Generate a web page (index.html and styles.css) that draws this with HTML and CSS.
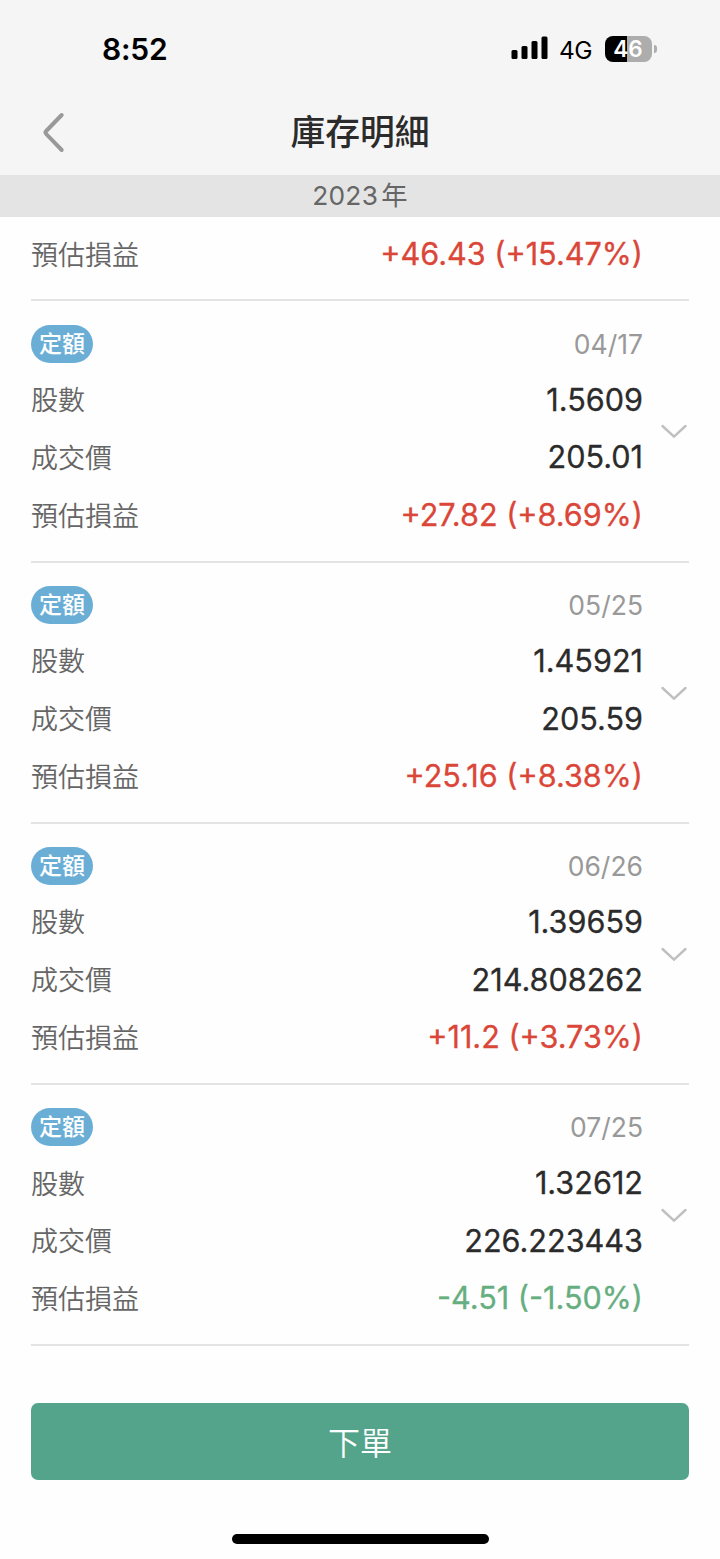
FILE: index.html
```html
<!DOCTYPE html>
<html lang="zh-Hant">
<head>
    <meta charset="UTF-8">
    <meta name="viewport" content="width=device-width, initial-scale=1.0">
    <title>庫存明細</title>
    <link rel="stylesheet" href="styles.css">
</head>
<body>
    <!-- 狀態列 -->
    <div class="status-bar">
        <span class="time">8:52</span>
        <div class="status-icons">
            <svg class="signal" width="38" height="24" viewBox="0 0 38 24">
                <rect x="0.5" y="14" width="6" height="9" rx="1.5"/>
                <rect x="10.5" y="10" width="6" height="13" rx="1.5"/>
                <rect x="20.5" y="5" width="6" height="18" rx="1.5"/>
                <rect x="30.5" y="0.5" width="6" height="22.5" rx="1.5"/>
            </svg>
            <span class="network">4G</span>
            <div class="battery">
                <div class="battery-body">46</div>
                <div class="battery-tip"></div>
            </div>
        </div>
    </div>

    <!-- 標題 -->
    <header class="nav-bar">
        <svg class="back" width="24" height="42" viewBox="0 0 24 42">
            <path d="M19.7 3 L4.2 19 Q2.8 20.5 4.2 22 L19.7 38"/>
        </svg>
        <h1 class="title">庫存明細</h1>
    </header>
    <div class="year">2023<span class="year-unit">年</span></div>

    <!-- 交易明細 -->
    <main class="list">
        <section class="item item-first">
            <div class="row"><span class="label">預估損益</span><span class="value up">+46.43 (+15.47%)</span></div>
        </section>

        <section class="item">
            <div class="row head"><span class="tag">定額</span><span class="date">04/17</span></div>
            <div class="row"><span class="label">股數</span><span class="value">1.5609</span></div>
            <div class="row"><span class="label">成交價</span><span class="value">205.01</span></div>
            <div class="row"><span class="label">預估損益</span><span class="value up">+27.82 (+8.69%)</span></div>
            <svg class="arrow" width="28" height="16" viewBox="0 0 28 16"><path d="M2.5 2 L14 12.7 L25.5 2"/></svg>
        </section>

        <section class="item">
            <div class="row head"><span class="tag">定額</span><span class="date">05/25</span></div>
            <div class="row"><span class="label">股數</span><span class="value">1.45921</span></div>
            <div class="row"><span class="label">成交價</span><span class="value">205.59</span></div>
            <div class="row"><span class="label">預估損益</span><span class="value up">+25.16 (+8.38%)</span></div>
            <svg class="arrow" width="28" height="16" viewBox="0 0 28 16"><path d="M2.5 2 L14 12.7 L25.5 2"/></svg>
        </section>

        <section class="item">
            <div class="row head"><span class="tag">定額</span><span class="date">06/26</span></div>
            <div class="row"><span class="label">股數</span><span class="value">1.39659</span></div>
            <div class="row"><span class="label">成交價</span><span class="value">214.808262</span></div>
            <div class="row"><span class="label">預估損益</span><span class="value up">+11.2 (+3.73%)</span></div>
            <svg class="arrow" width="28" height="16" viewBox="0 0 28 16"><path d="M2.5 2 L14 12.7 L25.5 2"/></svg>
        </section>

        <section class="item">
            <div class="row head"><span class="tag">定額</span><span class="date">07/25</span></div>
            <div class="row"><span class="label">股數</span><span class="value">1.32612</span></div>
            <div class="row"><span class="label">成交價</span><span class="value">226.223443</span></div>
            <div class="row"><span class="label">預估損益</span><span class="value down">-4.51 (-1.50%)</span></div>
            <svg class="arrow" width="28" height="16" viewBox="0 0 28 16"><path d="M2.5 2 L14 12.7 L25.5 2"/></svg>
        </section>
    </main>

    <!-- 下單按鈕 -->
    <footer class="footer">
        <button class="order-button">下單</button>
        <div class="home-indicator"></div>
    </footer>
</body>
</html>
```
FILE: styles.css
```css
* {
    box-sizing: border-box;
}
body {
    margin: 0;
    height: 1559px;
    overflow: hidden;
    display: flex;
    flex-direction: column;
    background-color: #fefefe;
    color: #2b2b2b;
    font-family: Inter, "Noto Sans CJK TC", sans-serif;
}
.status-bar {
    display: flex;
    justify-content: space-between;
    align-items: center;
    height: 90px;
    padding: 7px 63px 0 102px;
    background-color: #f5f5f5;
    color: #000;
}
.time {
    font-size: 30px;
    font-weight: 600;
    line-height: 36px;
    letter-spacing: -0.2px;
}
.status-icons {
    display: flex;
    align-items: center;
}
.signal {
    margin-top: -1px;
}
.network {
    width: 34px;
    margin: 2px 12px 0 10px;
    font-size: 24.5px;
    line-height: 30px;
    letter-spacing: -0.6px;
}
.battery {
    display: flex;
    align-items: center;
    gap: 2px;
}
.battery-body {
    width: 47px;
    height: 26px;
    padding-right: 1px;
    border-radius: 8px;
    background: linear-gradient(to right, #000 22px, #adadad 22px);
    color: #fff;
    font-size: 22.5px;
    font-weight: 600;
    line-height: 26px;
    text-align: center;
}
.battery-tip {
    width: 3px;
    height: 8px;
    border-radius: 0 4px 4px 0;
    background-color: #adadad;
}
.nav-bar {
    display: grid;
    grid-template-columns: 42px 1fr 42px;
    align-items: center;
    height: 85px;
    background-color: #f5f5f5;
}
.back {
    margin-left: 42px;
    fill: none;
    stroke: #999;
    stroke-width: 4;
    stroke-linecap: round;
}
.title {
    margin: 0;
    padding-bottom: 1px;
    font-size: 34.8px;
    font-weight: 500;
    line-height: 50px;
    text-align: center;
}
.year {
    height: 42px;
    background-color: #e4e4e4;
    color: #666;
    font-size: 26.3px;
    line-height: 42px;
    letter-spacing: 0.3px;
    text-align: center;
}
.year-unit {
    margin-left: 3px;
}
.list {
    padding: 0 31px;
}
.item {
    position: relative;
    height: 261.12px;
    padding: 16.4px 46px 0 0;
    border-bottom: 2px solid #e4e4e4;
}
.item-first {
    height: 84.4px;
    padding-top: 8px;
}
.row {
    display: flex;
    justify-content: space-between;
    align-items: center;
    height: 57.7px;
}
.head {
    height: 52px;
    margin-bottom: 0.6px;
}
.tag {
    width: 62px;
    height: 38px;
    border-radius: 19px;
    background-color: #6aaed6;
    color: #fff;
    font-size: 23px;
    font-weight: 500;
    line-height: 38px;
    text-align: center;
}
.date {
    color: #999;
    font-size: 26.5px;
}
.label {
    padding-bottom: 1px;
    color: #666;
    font-size: 27px;
    font-weight: 350;
}
.value {
    font-size: 30.6px;
    font-weight: 400;
    -webkit-text-stroke: 0.3px;
}
.up {
    color: #da4638;
}
.down {
    color: #66ae80;
}
.arrow {
    position: absolute;
    top: 123px;
    right: 1px;
    fill: none;
    stroke: #bfbfbf;
    stroke-width: 2.4;
    stroke-linecap: round;
}
.footer {
    display: flex;
    flex-direction: column;
    align-items: center;
    padding: 57px 31px 0;
}
.order-button {
    width: 100%;
    height: 77px;
    padding: 0 0 1px;
    border: none;
    border-radius: 7px;
    background-color: #54a48b;
    color: #fff;
    font-family: inherit;
    font-size: 32px;
    font-weight: 350;
    cursor: pointer;
}
.home-indicator {
    width: 257px;
    height: 10px;
    margin-top: 54px;
    border-radius: 5px;
    background-color: #000;
}
```
